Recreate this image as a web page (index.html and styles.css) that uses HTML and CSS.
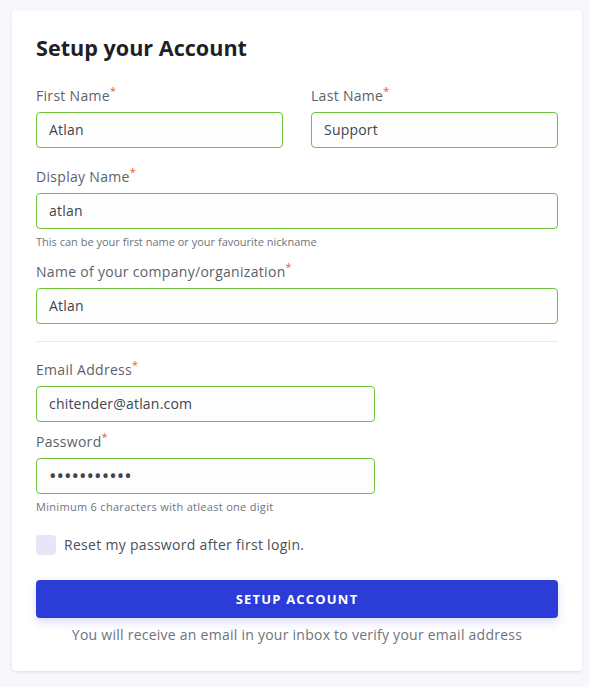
FILE: index.html
```html
<!DOCTYPE html>
<html>
<head>
<meta charset="utf-8">
<link rel="stylesheet" href="styles.css">
</head>
<body>
<div class="card">
  <h1 class="title">Setup your Account</h1>
  <div class="row">
    <div class="field">
      <label class="label">First Name<span class="req">*</span></label>
      <div class="input">Atlan</div>
    </div>
    <div class="field">
      <label class="label">Last Name<span class="req">*</span></label>
      <div class="input">Support</div>
    </div>
  </div>
  <div class="field f-display">
    <label class="label">Display Name<span class="req">*</span></label>
    <div class="input">atlan</div>
    <div class="help">This can be your first name or your favourite nickname</div>
  </div>
  <div class="field f-company">
    <label class="label">Name of your company/organization<span class="req">*</span></label>
    <div class="input">Atlan</div>
  </div>
  <hr class="divider">
  <div class="field narrow f-email">
    <label class="label">Email Address<span class="req">*</span></label>
    <div class="input">chitender@atlan.com</div>
  </div>
  <div class="field narrow f-pass">
    <label class="label">Password<span class="req">*</span></label>
    <div class="input dots">•••••••••••</div>
    <div class="help help2">Minimum 6 characters with atleast one digit</div>
  </div>
  <div class="check">
    <span class="box"></span>
    <span class="check-text">Reset my password after first login.</span>
  </div>
  <button class="btn">SETUP ACCOUNT</button>
  <p class="note">You will receive an email in your inbox to verify your email address</p>
</div>
</body>
</html>
```
FILE: styles.css
```css
html, body { margin: 0; padding: 0; }
body {
  background: #f7f7fc;
  font-family: "Open Sans", Lato, sans-serif;
  padding: 10px 7px 16px 12px;
}
.card {
  width: 570px;
  box-sizing: border-box;
  background: #fff;
  border-radius: 4px;
  box-shadow: 0 1px 3px rgba(30, 30, 60, 0.12);
  padding: 24px 24px 27px 24px;
}
.title {
  margin: 0;
  font-size: 21.6px;
  line-height: 28px;
  font-weight: 700;
  color: #1f1f24;
}
.row {
  display: flex;
  gap: 28px;
  margin-top: 26px;
}
.row .field { flex: 1; }
.label {
  display: block;
  font-size: 14px;
  line-height: 16px;
  letter-spacing: 0.3px;
  color: #5d626c;
  margin-bottom: 8px;
}
.req {
  color: #ee5a2c;
  font-size: 11px;
  vertical-align: top;
  line-height: 11px;
  position: relative;
  top: -3px;
  letter-spacing: 0;
}
.input {
  height: 36px;
  box-sizing: border-box;
  border: 1px solid #6fc03a;
  border-radius: 4px;
  background: #fdfdfd;
  padding: 0 12px;
  font-size: 14px;
  line-height: 34px;
  letter-spacing: 0.2px;
  color: #3d4550;
}
.dots {
  font-size: 20px;
  letter-spacing: 0;
  color: #3d4550;
}
.help {
  margin-top: 6px;
  font-size: 11px;
  line-height: 14px;
  color: #6e737c;
}
.help2 { letter-spacing: 0.3px; }
.f-display { margin-top: 21px; }
.f-company { margin-top: 15px; }
.divider {
  border: 0;
  border-top: 1px solid #e8e8f0;
  margin: 17px 0 0 0;
}
.narrow { width: 339px; }
.f-email { margin-top: 20px; }
.f-pass { margin-top: 12px; }
.check {
  display: flex;
  align-items: center;
  gap: 8px;
  margin-top: 21px;
}
.box {
  width: 20px;
  height: 20px;
  border-radius: 4px;
  background: #e6e6f8;
}
.check-text {
  font-size: 14px;
  letter-spacing: 0.3px;
  color: #4a505a;
  position: relative;
  top: -1px;
}
.btn {
  display: block;
  width: 100%;
  height: 38px;
  margin-top: 25px;
  border: 0;
  border-radius: 4px;
  background: #2b3dd6;
  color: #fff;
  font-family: inherit;
  font-size: 13px;
  font-weight: 700;
  letter-spacing: 1.2px;
  box-shadow: 0 4px 10px rgba(43, 61, 214, 0.18);
}
.note {
  margin: 8px 0 0 0;
  text-align: center;
  font-size: 14px;
  line-height: 18px;
  letter-spacing: 0.25px;
  color: #6e737c;
}
```
